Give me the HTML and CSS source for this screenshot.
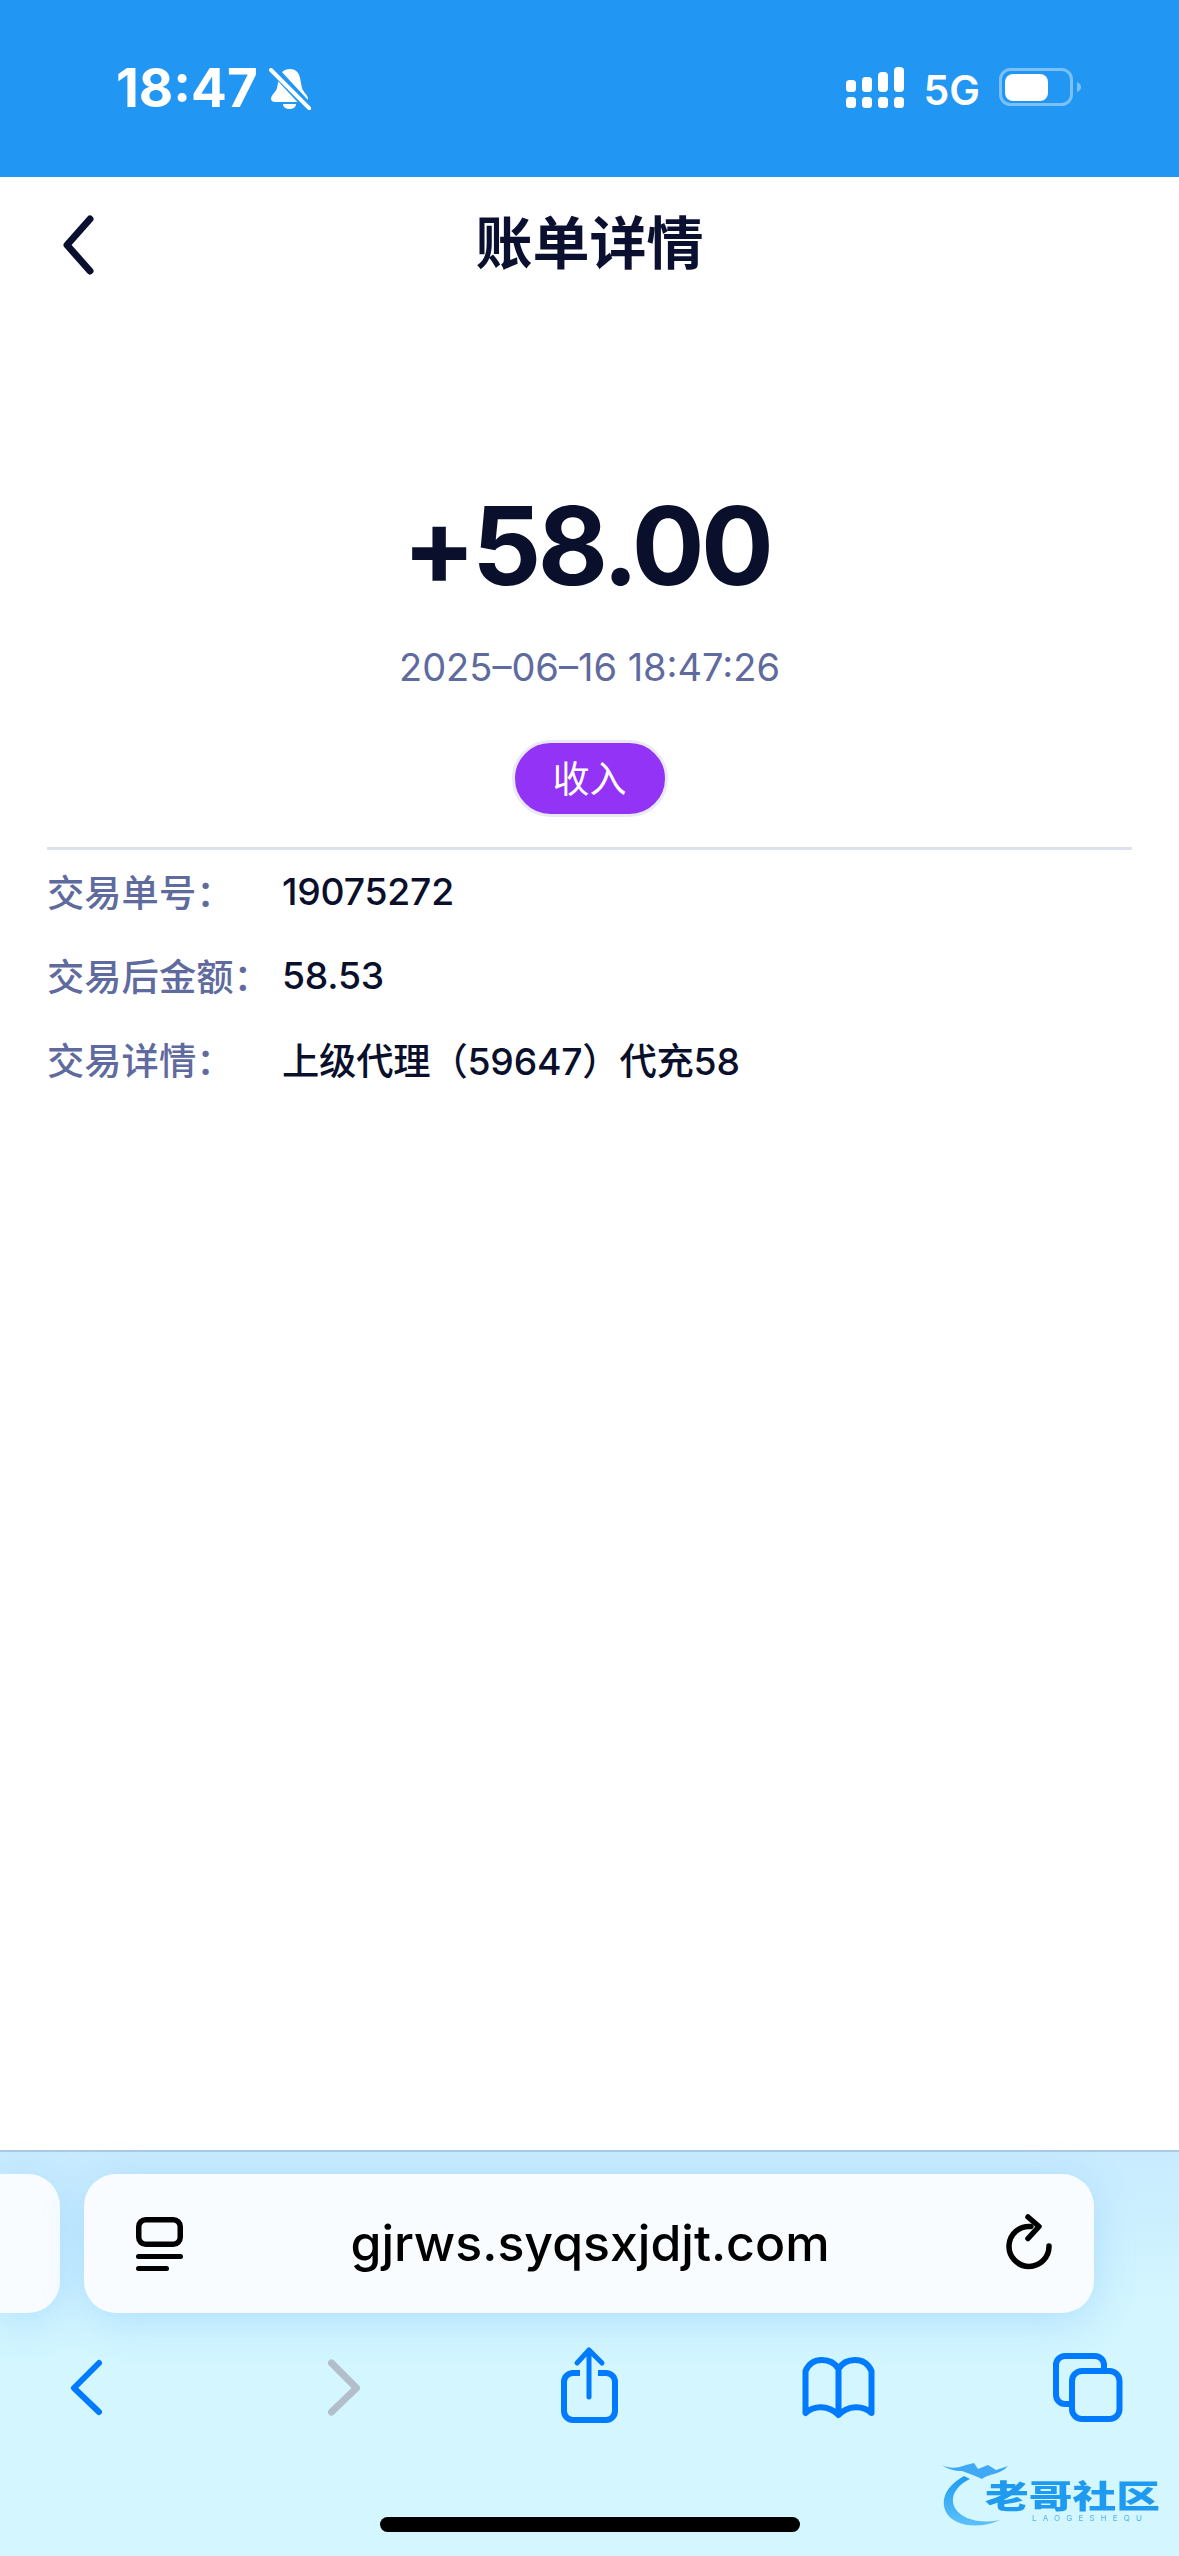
FILE: index.html
```html
<!DOCTYPE html>
<html lang="zh-CN">
<head>
<meta charset="utf-8">
<title>账单详情</title>
<link rel="stylesheet" href="styles.css">
</head>
<body>
<div class="page">
  <header class="status">
    <div class="status-left">
      <span class="time">18:47</span>
      <svg class="bell" viewBox="0 0 42 42" width="42" height="42">
        <path class="fill-w" d="M21 1c5 0 9 3 10 9l2 10c1 4 6 7 6 11 0 2-1 3-3 3H6c-2 0-4-1-4-3 0-4 5-7 6-11l2-10C11 4 16 1 21 1z"/>
        <path class="fill-w" d="M14 36h13c0 3-3 5-6.500 5S14 39 14 36z"/>
        <path class="bell-gap" d="M2 -1 L43 43"/>
        <path class="bell-slash" d="M2 2 L41 41"/>
      </svg>
    </div>
    <div class="status-right">
      <svg class="signal" viewBox="0 0 58 41" width="58" height="41">
        <rect class="fill-w" x="0" y="13" width="10" height="12" rx="3.500"/>
        <rect class="fill-w" x="16" y="10" width="10" height="15" rx="3.500"/>
        <rect class="fill-w" x="32" y="5" width="10" height="20" rx="4"/>
        <rect class="fill-w" x="48" y="0" width="10" height="25" rx="4"/>
        <rect class="fill-w" x="0" y="30" width="10" height="11" rx="3.500"/>
        <rect class="fill-w" x="16" y="30" width="10" height="11" rx="3.500"/>
        <rect class="fill-w" x="32" y="30" width="10" height="11" rx="3.500"/>
        <rect class="fill-w" x="48" y="30" width="10" height="11" rx="3.500"/>
      </svg>
      <span class="net">5G</span>
      <svg class="battery" viewBox="0 0 82 38" width="82" height="38">
        <rect class="batt-body" x="1.500" y="1.500" width="71" height="35" rx="10"/>
        <rect class="fill-w" x="6" y="6" width="43" height="27" rx="8"/>
        <path class="batt-tip" d="M78 14c3 1 4 3 4 5s-1 4-4 5z"/>
      </svg>
    </div>
  </header>

  <nav class="nav">
    <svg class="nav-back" viewBox="0 0 40 60" width="40" height="60">
      <path d="M32 4 L9 30 L32 56"/>
    </svg>
    <h1 class="nav-title">账单详情</h1>
  </nav>

  <main class="detail">
    <section class="hero">
      <div class="amount">+58.00</div>
      <div class="date">2025–06–16 18:47:26</div>
      <div class="tag">收入</div>
    </section>
    <dl class="rows">
      <div class="row"><dt>交易单号：</dt><dd>19075272</dd></div>
      <div class="row"><dt>交易后金额：</dt><dd>58.53</dd></div>
      <div class="row"><dt>交易详情：</dt><dd>上级代理（59647）代充58</dd></div>
    </dl>
  </main>

  <footer class="browser">
    <div class="url-row">
      <div class="stub"></div>
      <div class="url-bar">
        <svg class="reader" viewBox="0 0 47 54" width="47" height="54">
          <rect x="2.750" y="2.750" width="41.500" height="24.500" rx="7"/>
          <path d="M2.500 39.500 H44.500"/>
          <path d="M2.500 51.500 H30.500"/>
        </svg>
        <span class="url">gjrws.syqsxjdjt.com</span>
        <svg class="reload" viewBox="0 0 55 56" width="55" height="56">
          <path d="M52 30 A20 20 0 1 1 34 10.500"/>
          <path d="M31 1 L42 10.500 L31 22.500"/>
        </svg>
      </div>
    </div>
    <div class="toolbar">
      <svg class="tool" viewBox="0 0 72 80" width="72" height="80"><path class="t-blue" d="M49 16 L24 41 L49 65"/></svg>
      <svg class="tool" viewBox="0 0 72 80" width="72" height="80"><path class="t-grey" d="M30.500 16 L55.500 41 L30.500 65"/></svg>
      <svg class="tool" viewBox="0 0 72 80" width="72" height="80">
        <path class="t-blue t-butt" d="M29 26 H22 a9 9 0 0 0 -9 9 V64 a9 9 0 0 0 9 9 H55 a9 9 0 0 0 9 -9 V35 a9 9 0 0 0 -9 -9 H47"/>
        <path class="t-blue-thin" d="M38 50 V3 M26 16 L38 3 L51 16"/>
      </svg>
      <svg class="tool" viewBox="0 0 72 80" width="72" height="80">
        <path class="t-blue" d="M3.500 66 V24 C7 16 13 13 20 13 C27 13 33 16 36.500 22 C40 16 46 13 53 13 C60 13 66 16 69.500 24 V66 C61 58 46 58 36.500 68 C27 58 12 58 3.500 66 Z M36.500 22 V66"/>
      </svg>
      <svg class="tool" viewBox="0 0 72 80" width="72" height="80">
        <path class="t-blue t-butt" d="M18 57 H13 a9 9 0 0 1 -9 -9 V18 a9 9 0 0 1 9 -9 H43 a9 9 0 0 1 9 9 V24"/>
        <rect class="t-blue" x="20" y="24" width="47.500" height="48" rx="10"/>
      </svg>
    </div>
    <div class="home"></div>
    <svg class="logo" viewBox="0 0 226 76" width="226" height="76">
      <defs>
        <linearGradient id="logoGrad" x1="0" y1="0" x2="0" y2="1">
          <stop offset="0" stop-color="#1e9bf0"/>
          <stop offset="1" stop-color="#5cc1fb"/>
        </linearGradient>
      </defs>
      <path class="logo-dragon" d="M26 18 C8 28 2 42 8 54 C15 68 40 72 62 62 C44 66 24 62 17 50 C11 39 18 28 32 21 Z"/>
      <path class="logo-head" d="M4 7 C12 11 20 10 28 7 L36 5 L40 11 L50 7 L58 12 L70 8 C62 17 52 15 44 21 C38 18 30 15 24 13 C16 13 10 11 4 7 Z"/>
      <text class="logo-cn" x="47" y="50" textLength="175" lengthAdjust="spacingAndGlyphs">老哥社区</text>
      <text class="logo-en" x="94" y="63" textLength="110">LAOGESHEQU</text>
    </svg>
  </footer>
</div>
</body>
</html>
```
FILE: styles.css
```css
* { box-sizing: border-box; }
html, body { margin: 0; padding: 0; background: #fff; }
body { font-family: "Inter", "Noto Sans CJK SC", sans-serif; }
.page { width: 1179px; height: 2556px; display: flex; flex-direction: column; overflow: hidden; position: relative; }

.status { height: 177px; flex: none; background: #2196f3; display: flex; justify-content: space-between; padding: 67px 98px 0 116px; align-items: flex-start; }
.status-left { display: flex; align-items: flex-start; gap: 11px; }
.time { font: 700 53px/43px "Inter", sans-serif; color: #fff; }
.bell { display: block; margin-top: 1px; }
.fill-w { fill: #fff; }
.bell-gap { stroke: #2196f3; stroke-width: 9; fill: none; }
.bell-slash { stroke: #fff; stroke-width: 4; stroke-linecap: round; fill: none; }
.status-right { display: flex; align-items: flex-start; }
.signal { display: block; margin-right: 20px; }
.net { font: 600 41px/38px "Inter", sans-serif; color: #fff; margin: 4px 19px 0 0; }
.battery { display: block; margin-top: 1px; }
.batt-body { fill: none; stroke: #7cc0f8; stroke-width: 3; }
.batt-tip { fill: #7cc0f8; }

.nav { height: 132px; flex: none; position: relative; display: flex; align-items: center; justify-content: center; padding-top: 2px; }
.nav-back { position: absolute; left: 58px; top: 38px; }
.nav-back path { fill: none; stroke: #0b1030; stroke-width: 7; stroke-linecap: round; stroke-linejoin: round; }
.nav-title { margin: 0; font: 700 57px/68px "Inter", "Noto Sans CJK SC", sans-serif; color: #0b1030; }

.detail { flex: 1; padding: 0 47px; }
.hero { display: flex; flex-direction: column; align-items: center; padding-top: 172px; border-bottom: 3px solid #dde1ee; height: 541px; }
.amount { font: 700 108px/130px "Inter", sans-serif; color: #0a0f2c; letter-spacing: -3.500px; margin-left: -6px; }
.date { font: 400 38px/46px "Inter", sans-serif; color: #5f6b9e; margin-top: 33px; }
.tag { margin-top: 50px; width: 156px; height: 77px; border-radius: 39px; background: #9333f5; border: 3px solid #e9e9f3; color: #fff; font: 400 37px/69px "Noto Sans CJK SC", sans-serif; text-align: center; }

.rows { margin: -1px 0 0; display: flex; flex-direction: column; }
.row { display: flex; height: 84px; align-items: center; font-size: 37.300px; font-weight: 450; }
dt { width: 235px; flex: none; color: #5f6b9e; font-family: "Noto Sans CJK SC", sans-serif; }
dd { margin: 0; color: #0a0f2c; font-family: "Inter", "Noto Sans CJK SC", sans-serif; letter-spacing: -.200px; }

.browser { height: 406px; flex: none; background: linear-gradient(#c8ebff, #d3f6ff 38%); border-top: 2px solid #a9cbe6; position: relative; }
.url-row { display: flex; gap: 24px; padding-top: 22px; }
.stub { width: 60px; height: 139px; background: #f8fcff; border-radius: 0 32px 32px 0; box-shadow: 0 8px 40px rgba(90, 170, 250, .3); }
.url-bar { width: 1010px; height: 139px; background: #f8fcff; border-radius: 32px; box-shadow: 0 8px 40px rgba(90, 170, 250, .3); display: flex; align-items: center; justify-content: space-between; padding: 0 42px 0 52px; }
.reader { display: block; }
.reader rect, .reader path { fill: none; stroke: #000; stroke-width: 5.500; stroke-linecap: round; }
.reader path { stroke-width: 5; }
.url { font: 500 50px/60px "Inter", sans-serif; color: #000; margin-top: -2px; }
.reload { display: block; overflow: visible; }
.reload path { fill: none; stroke: #000; stroke-width: 5.500; stroke-linecap: round; stroke-linejoin: round; }

.toolbar { display: flex; justify-content: space-between; padding: 34px 55px 0 50px; }
.tool { display: block; overflow: visible; }
.t-blue, .t-blue-thin, .t-grey { fill: none; stroke-linecap: round; stroke-linejoin: round; }
.t-blue { stroke: #007aff; stroke-width: 6; }
.t-butt { stroke-linecap: butt; }
.t-blue-thin { stroke: #007aff; stroke-width: 5; }
.t-grey { stroke: #b2bfcb; stroke-width: 7; }

.home { position: absolute; left: 380px; top: 365px; width: 420px; height: 15px; border-radius: 8px; background: #000; }

.logo { position: absolute; left: 938px; top: 306px; filter: blur(.7px); }
.logo-dragon { fill: url(#logoGrad); }
.logo-head { fill: #3fa9f5; }
.logo-cn { font: 900 32px "Noto Sans CJK SC", sans-serif; fill: #1e9bf0; }
.logo-en { font: 400 8px "Inter", sans-serif; fill: #4fb4f8; }
```
